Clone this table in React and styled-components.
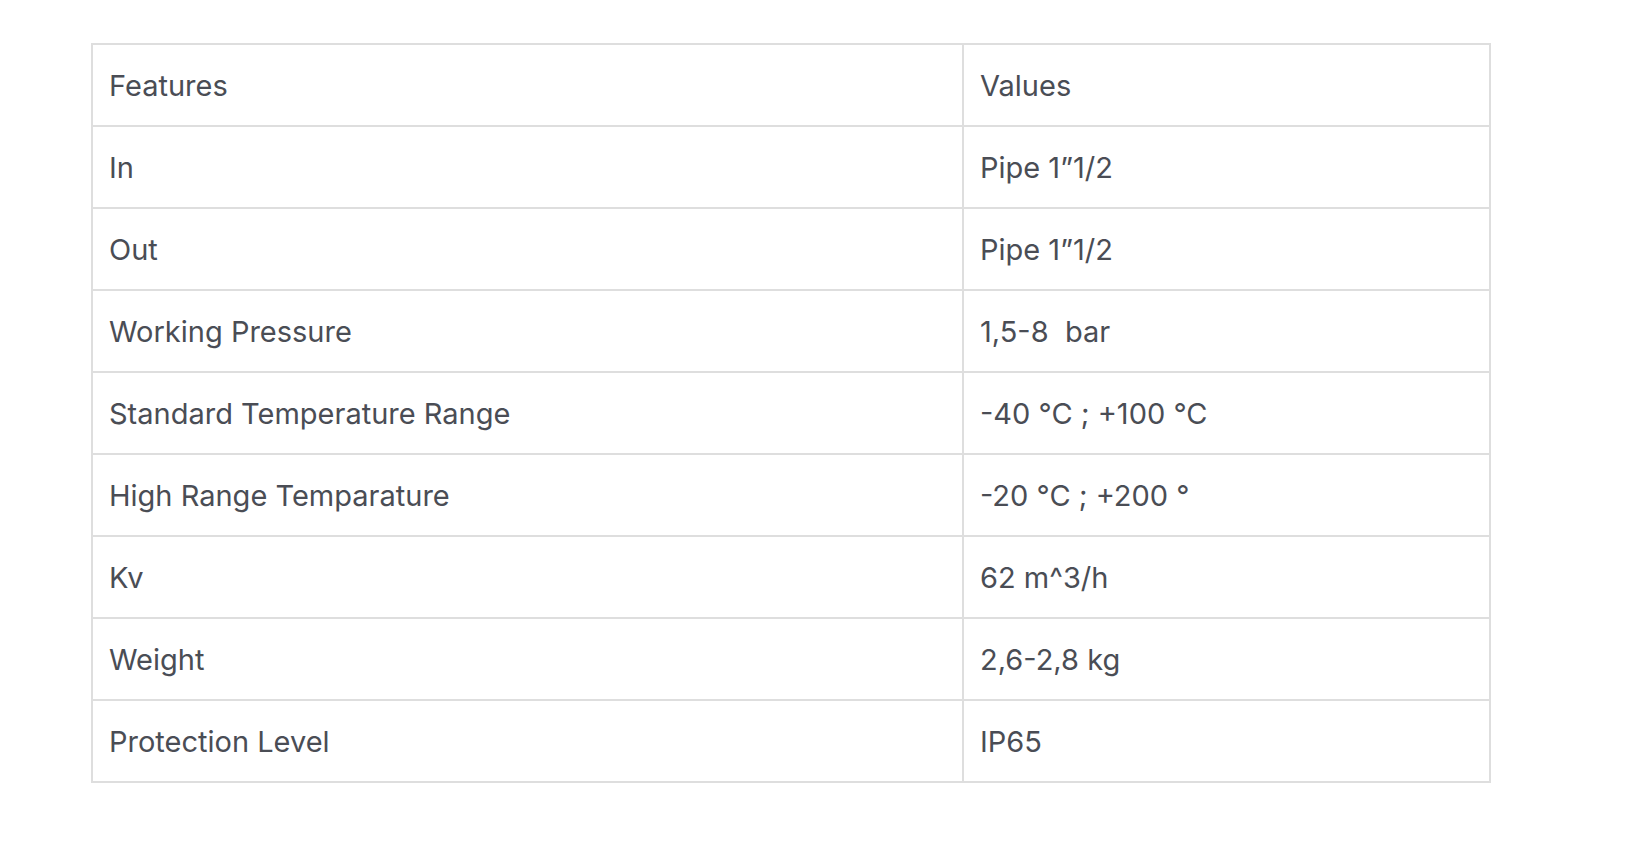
import React from 'react'
import styled, { createGlobalStyle } from 'styled-components'

const GlobalStyle = createGlobalStyle`
  body {
    margin: 0;
    background: #ffffff;
    font-family: Inter, "Liberation Sans", Arial, sans-serif;
  }
`

const Page = styled.div`
  padding: 43px 0 0 91px;
`

const Table = styled.div`
  display: grid;
  grid-template-columns: 871px 527px;
  width: 1400px;
  box-sizing: border-box;
  border-top: 2px solid #dedede;
  border-left: 2px solid #dedede;
`

const Cell = styled.div`
  box-sizing: border-box;
  height: 82px;
  display: flex;
  align-items: center;
  padding: 0 16px;
  border-right: 2px solid #dedede;
  border-bottom: 2px solid #dedede;
  font-size: 29px;
  color: #4a4d55;
  white-space: pre;
`

const rows = [
  ['Features', 'Values'],
  ['In', 'Pipe 1\u201d1/2'],
  ['Out', 'Pipe 1\u201d1/2'],
  ['Working Pressure', '1,5-8  bar'],
  ['Standard Temperature Range', '-40 °C ; +100 °C'],
  ['High Range Temparature', '-20 °C ; +200 °'],
  ['Kv', '62 m^3/h'],
  ['Weight', '2,6-2,8 kg'],
  ['Protection Level', 'IP65'],
]

export default function App() {
  return (
    <Page>
      <GlobalStyle />
      <Table>
        {rows.map(([feature, value]) => (
          <React.Fragment key={feature}>
            <Cell>{feature}</Cell>
            <Cell>{value}</Cell>
          </React.Fragment>
        ))}
      </Table>
    </Page>
  )
}
